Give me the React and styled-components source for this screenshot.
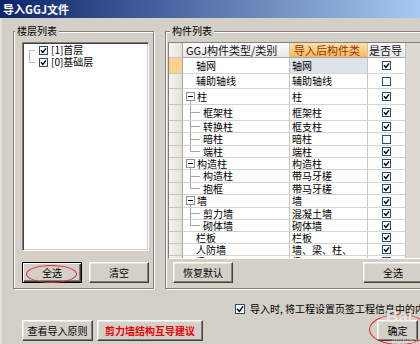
import React from 'react';
import styled, { createGlobalStyle } from 'styled-components';

const GlobalStyle = createGlobalStyle`
  * { box-sizing: border-box; }
  html, body { margin: 0; padding: 0; background: #d4d0c8; }
  body {
    font-family: "Noto Sans CJK SC", "Liberation Sans", sans-serif;
    font-size: 10px;
    color: #000;
  }
`;

const Window = styled.div`
  position: relative;
  width: 420px;
  height: 344px;
  overflow: hidden;
  background: #d4d0c8;
  box-shadow: inset 2px 0 0 #e4e1da;
  display: flex;
  flex-direction: column;
`;

const TitleBar = styled.div`
  height: 18px;
  flex: none;
  display: flex;
  align-items: center;
  padding-left: 3px;
  background: linear-gradient(90deg, #0a246a 0%, #a6caf0 100%);
  color: #fff;
  font-weight: 700;
  font-size: 11px;
  line-height: 1;
`;

const Main = styled.div`
  display: flex;
  gap: 11px;
  padding: 13px 0 0 13px;
  flex: none;
`;

const Group = styled.div`
  position: relative;
  flex: none;
  width: ${p => p.$w}px;
  height: 258px;
  display: flex;
  flex-direction: column;
  padding: 10px ${p => p.$pr}px 5px ${p => p.$pl}px;
  border: 1px solid #808080;
  box-shadow: inset 1px 1px 0 #fff, 1px 1px 0 #fff;
`;

const Legend = styled.span`
  position: absolute;
  top: -7px;
  left: ${p => p.$left}px;
  padding: 0 2px;
  line-height: 12px;
  background: #d4d0c8;
`;

const ListBox = styled.div`
  height: 209px;
  background: #fff;
  border: 1px solid;
  border-color: #808080 #fff #fff #808080;
  box-shadow: inset 1px 1px 0 #404040, inset -1px -1px 0 #d4d0c8;
  padding: 1px 0 0 3px;
`;

const TreeItem = styled.div`
  display: flex;
  align-items: center;
  height: 12px;
  gap: 3px;
  white-space: nowrap;
  line-height: 1;
`;

const ButtonRow = styled.div`
  display: flex;
  justify-content: space-between;
  margin-top: ${p => p.$mt}px;
  padding: 0 ${p => p.$pr || 0}px 0 ${p => p.$pl || 0}px;
`;

const Btn = styled.button`
  position: relative;
  flex: none;
  width: ${p => p.$w}px;
  height: 21px;
  margin: 0;
  padding: 0;
  font-family: inherit;
  font-size: 10px;
  line-height: 1;
  color: ${p => (p.$red ? '#ea0000' : '#000')};
  font-weight: ${p => (p.$red ? 700 : 400)};
  background: #d4d0c8;
  border: 1px solid;
  border-color: ${p => (p.$focus ? '#000' : '#fff #404040 #404040 #fff')};
  box-shadow: ${p =>
    p.$focus
      ? 'inset 1px 1px 0 #fff, inset -1px -1px 0 #404040, inset -2px -2px 0 #808080'
      : 'inset -1px -1px 0 #808080, inset 1px 1px 0 #e8e6e0'};
`;

const Ellipse = styled.span`
  position: absolute;
  left: ${p => p.$x}px;
  top: ${p => p.$y}px;
  width: ${p => p.$w}px;
  height: ${p => p.$h}px;
  border: 1.5px solid #e2262b;
  border-radius: 50%;
  pointer-events: none;
`;

const Grid = styled.div`
  height: 217px;
  overflow: hidden;
  border: 1px solid;
  border-color: #808080 #fff #fff #808080;
  background: #dcd9d2;
`;

const GridRow = styled.div`
  display: grid;
  grid-template-columns: 14px 107px 78px 38px;
  height: ${p => p.$h}px;
`;

const RowHead = styled.div`
  background: ${p => (p.$sel ? '#fcd38e' : 'linear-gradient(90deg, #f5f4f0, #e3e1d9)')};
  border-right: 1px solid #a9a69d;
  border-bottom: 1px solid #c9c6bd;
`;

const HeadCell = styled.div`
  display: flex;
  align-items: center;
  padding-left: ${p => p.$pl}px;
  font-size: 11px;
  line-height: 1;
  white-space: nowrap;
  overflow: hidden;
  color: ${p => (p.$hot ? '#9c2f08' : '#111')};
  background: ${p =>
    p.$hot ? 'linear-gradient(#fde2aa, #f5ba57)' : 'linear-gradient(#fdfdfd, #e8e8e8)'};
  border-right: 1px solid #c2c2c2;
  border-bottom: 1px solid #a6a6a6;
`;

const Cell = styled.div`
  display: flex;
  align-items: center;
  justify-content: ${p => (p.$center ? 'center' : 'flex-start')};
  padding-left: ${p => p.$pl || 0}px;
  background: ${p => (p.$sel ? '#dde2eb' : '#fff')};
  border-right: 1px solid #c6c6c6;
  border-bottom: 1px solid #d4d4d4;
  white-space: nowrap;
  overflow: hidden;
  line-height: 1;
`;

const Label = styled.span`
  margin-left: ${p => p.$ml || 0}px;
`;

const OptionRow = styled.div`
  display: flex;
  align-items: center;
  gap: 5px;
  height: 12px;
  margin-top: 14px;
  padding-left: 235px;
  white-space: nowrap;
  line-height: 1;
`;

const BottomBar = styled.div`
  display: flex;
  gap: 4px;
  margin-top: 5px;
  padding: 0 2px 0 22px;
`;

const Spacer = styled.div`
  flex: 1;
`;

const Watermark = styled.div`
  position: absolute;
  left: 386px;
  top: 308px;
  display: flex;
  flex-direction: column;
  pointer-events: none;
  font-family: "Liberation Sans", sans-serif;
  line-height: 1;
`;

const WatermarkBig = styled.span`
  font-size: 17px;
  font-weight: 700;
  color: rgba(255, 255, 255, 0.7);
  text-shadow: 0 0 1px rgba(150, 150, 150, 0.5);
`;

const WatermarkSmall = styled.span`
  margin: 12px 0 0 6px;
  font-size: 8px;
  color: rgba(255, 255, 255, 0.55);
`;

const CheckBox = ({ checked, size = 9 }) => (
  <svg width={size} height={size} viewBox={`0 0 ${size} ${size}`} style={{ flex: 'none', display: 'block' }}>
    <rect x="0.5" y="0.5" width={size - 1} height={size - 1} fill="#fff" stroke="#2b4d73" />
    {checked && (
      <path
        d={`M2 ${size / 2 - 0.3} L${size / 2 - 0.6} ${size - 2.6} L${size - 2} 2.4`}
        fill="none"
        stroke="#000"
        strokeWidth="1.5"
      />
    )}
  </svg>
);

const GroupGlyph = ({ h }) => {
  const top = Math.floor((h - 9) / 2);
  return (
    <svg width="9" height={h} style={{ flex: 'none', display: 'block' }}>
      <line x1="4.5" y1={top + 9} x2="4.5" y2={h} stroke="#a4a4a4" />
      <rect x="0.5" y={top + 0.5} width="8" height="8" fill="#fff" stroke="#8e8e8e" />
      <line x1="2" y1={top + 4.5} x2="7" y2={top + 4.5} stroke="#000" />
    </svg>
  );
};

const ChildGlyph = ({ h, last }) => {
  const mid = Math.floor(h / 2) + 0.5;
  return (
    <svg width="16" height={h} style={{ flex: 'none', display: 'block' }}>
      <line x1="4.5" y1="0" x2="4.5" y2={last ? mid : h} stroke="#a4a4a4" />
      <line x1="4.5" y1={mid} x2="14" y2={mid} stroke="#a4a4a4" />
    </svg>
  );
};

const FloorGlyph = ({ first }) => (
  <svg width="10" height="12" style={{ flex: 'none', display: 'block' }}>
    {first ? (
      <path d="M9 6.5 H3.5 V12" fill="none" stroke="#b8b8b8" />
    ) : (
      <path d="M3.5 0 V6.5 H9" fill="none" stroke="#b8b8b8" />
    )}
  </svg>
);

const rows = [
  { h: 16, kind: 'leaf', name: '轴网', target: '轴网', checked: true, sel: true },
  { h: 15, kind: 'leaf', name: '辅助轴线', target: '辅助轴线', checked: false },
  { h: 16, kind: 'group', name: '柱', target: '柱', checked: true },
  { h: 16, kind: 'child', name: '框架柱', target: '框架柱', checked: true },
  { h: 12, kind: 'child', name: '转换柱', target: '框支柱', checked: true },
  { h: 13, kind: 'child', name: '暗柱', target: '暗柱', checked: false },
  { h: 12, kind: 'child', last: true, name: '端柱', target: '端柱', checked: true },
  { h: 12, kind: 'group', name: '构造柱', target: '构造柱', checked: true },
  { h: 13, kind: 'child', name: '构造柱', target: '带马牙槎', checked: true },
  { h: 12, kind: 'child', last: true, name: '抱框', target: '带马牙槎', checked: true },
  { h: 13, kind: 'group', name: '墙', target: '墙', checked: true },
  { h: 12, kind: 'child', name: '剪力墙', target: '混凝土墙', checked: true },
  { h: 12, kind: 'child', last: true, name: '砌体墙', target: '砌体墙', checked: true },
  { h: 12, kind: 'leaf', name: '栏板', target: '栏板', checked: true },
  { h: 12, kind: 'leaf', name: '人防墙', target: '墙、梁、柱、', checked: true },
  { h: 12, kind: 'leaf', name: '梁', target: '梁', checked: true },
];

const NameCell = ({ row }) => {
  const inner = row.h - 1;
  if (row.kind === 'group') {
    return (
      <Cell $pl={3}>
        <GroupGlyph h={inner} />
        <Label $ml={2}>{row.name}</Label>
      </Cell>
    );
  }
  if (row.kind === 'child') {
    return (
      <Cell $pl={3}>
        <ChildGlyph h={inner} last={row.last} />
        <Label $ml={1}>{row.name}</Label>
      </Cell>
    );
  }
  return (
    <Cell $pl={13}>
      <Label>{row.name}</Label>
    </Cell>
  );
};

export default function App() {
  return (
    <>
      <GlobalStyle />
      <Window>
        <TitleBar>导入GGJ文件</TitleBar>
        <Main>
          <Group $w={141} $pl={8} $pr={4}>
            <Legend $left={1}>楼层列表</Legend>
            <ListBox>
              <TreeItem>
                <FloorGlyph first />
                <CheckBox checked />
                <span>[1]首层</span>
              </TreeItem>
              <TreeItem>
                <FloorGlyph />
                <CheckBox checked />
                <span>[0]基础层</span>
              </TreeItem>
            </ListBox>
            <ButtonRow $mt={11}>
              <Btn $w={60} $focus>
                全选
                <Ellipse $x={3} $y={2} $w={51} $h={18} />
              </Btn>
              <Btn $w={60}>清空</Btn>
            </ButtonRow>
          </Group>
          <Group $w={263} $pl={2} $pr={4}>
            <Legend $left={4}>构件列表</Legend>
            <Grid>
              <GridRow $h={15}>
                <RowHead />
                <HeadCell $pl={3}>GGJ构件类型/类别</HeadCell>
                <HeadCell $pl={4} $hot>导入后构件类</HeadCell>
                <HeadCell $pl={1}>是否导</HeadCell>
              </GridRow>
              {rows.map((r, i) => (
                <GridRow key={i} $h={r.h}>
                  <RowHead $sel={r.sel} />
                  <NameCell row={r} />
                  <Cell $pl={2} $sel={r.sel}>{r.target}</Cell>
                  <Cell $center>
                    <CheckBox checked={r.checked} />
                  </Cell>
                </GridRow>
              ))}
            </Grid>
            <ButtonRow $mt={3} $pl={5}>
              <Btn $w={60}>恢复默认</Btn>
              <Btn $w={60}>全选</Btn>
            </ButtonRow>
          </Group>
        </Main>
        <OptionRow>
          <CheckBox checked size={10} />
          <span>导入时, 将工程设置页签工程信息中的内容导入到当前工程</span>
        </OptionRow>
        <BottomBar>
          <Btn $w={71}>查看导入原则</Btn>
          <Btn $w={106} $red>剪力墙结构互导建议</Btn>
          <Spacer />
          <Btn $w={41}>
            确定
            <Ellipse $x={-9} $y={-7} $w={60} $h={31} />
          </Btn>
        </BottomBar>
        <Watermark>
          <WatermarkBig>Bai</WatermarkBig>
          <WatermarkSmall>jingyan</WatermarkSmall>
        </Watermark>
      </Window>
    </>
  );
}
